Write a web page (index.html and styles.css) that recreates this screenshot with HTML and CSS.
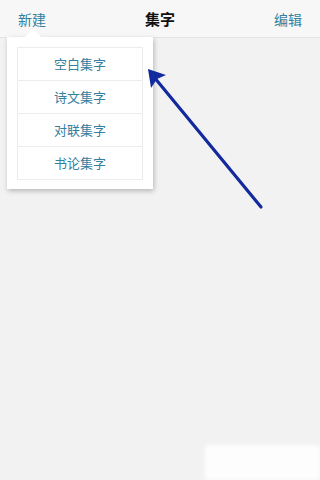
FILE: index.html
```html
<!DOCTYPE html>
<html lang="zh">
<head>
  <meta charset="UTF-8" />
  <meta name="viewport" content="width=device-width, initial-scale=1.0"/>
  <title>集字</title>
  <link rel="stylesheet" href="styles.css">
</head>
<body>
  <div class="nav-bar">
    <span class="nav-btn">新建</span>
    <span class="nav-title">集字</span>
    <span class="nav-btn">编辑</span>
  </div>

  <div class="content"></div>

  <div class="popup">
    <div class="popup-list">
      <div class="popup-item">空白集字</div>
      <div class="popup-item">诗文集字</div>
      <div class="popup-item">对联集字</div>
      <div class="popup-item">书论集字</div>
    </div>
  </div>

  <svg class="pointer" width="320" height="480" viewBox="0 0 320 480">
    <line x1="261" y1="207" x2="154" y2="77" stroke="#13299e" stroke-width="3.2" stroke-linecap="round"/>
    <path d="M148,69 L166,75 L157,79 L151,88 Z" fill="#13299e"/>
  </svg>

  <div class="watermark"></div>
</body>
</html>
```

FILE: styles.css
```css
:root {
  --accent: #34809e;
  --bg: #f2f2f2;
  --bar: #f7f7f7;
}

body {
  margin: 0;
  padding: 0;
  width: 320px;
  height: 480px;
  background: var(--bg);
  font-family: "Noto Sans CJK SC", "Liberation Sans", sans-serif;
  position: relative;
  overflow: hidden;
}

.nav-bar {
  height: 38px;
  background: var(--bar);
  border-bottom: 1px solid #e4e4e4;
  display: flex;
  justify-content: space-between;
  align-items: center;
  padding: 0 18px;
  box-sizing: border-box;
}

.nav-btn {
  font-size: 14px;
  color: var(--accent);
}

.nav-title {
  font-size: 15px;
  font-weight: 700;
  color: #111;
}

.popup {
  position: absolute;
  left: 7px;
  top: 37px;
  width: 146px;
  padding: 10px 10px 9px;
  box-sizing: border-box;
  background: #fff;
  box-shadow: 1px 2px 5px rgba(0, 0, 0, 0.25);
}

.popup::before {
  content: "";
  position: absolute;
  left: 18px;
  top: -8px;
  border-left: 8px solid transparent;
  border-right: 8px solid transparent;
  border-bottom: 8px solid #fff;
}

.popup-list {
  border: 1px solid #ececec;
}

.popup-item {
  height: 32px;
  line-height: 32px;
  text-align: center;
  font-size: 13px;
  color: var(--accent);
  border-bottom: 1px solid #ececec;
}

.popup-item:last-child {
  border-bottom: none;
}

.pointer {
  position: absolute;
  left: 0;
  top: 0;
  pointer-events: none;
}

.watermark {
  position: absolute;
  left: 205px;
  top: 445px;
  width: 115px;
  height: 35px;
  background: #fdfdfd;
  border-radius: 4px 0 0 0;
  filter: blur(2px);
}
```
